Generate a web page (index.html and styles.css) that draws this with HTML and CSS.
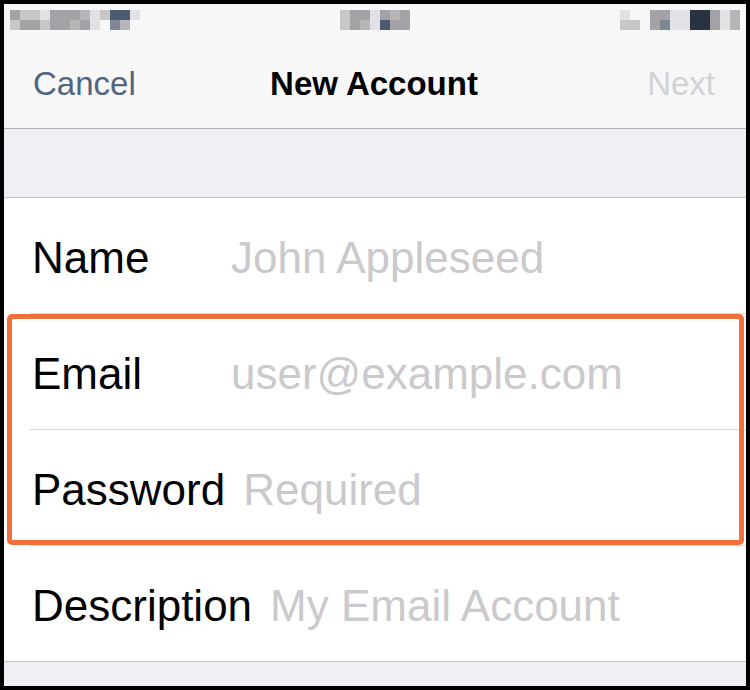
FILE: index.html
```html
<!DOCTYPE html>
<html lang="en">
<head>
<meta charset="utf-8">
<title>New Account</title>
<link rel="stylesheet" href="styles.css">
</head>
<body>
<div class="screen">
  <div class="status">
    <div class="mosaic mosaic-left">
      <i class="g1"></i><i class="g2"></i><i class="g2"></i><i class="g3"></i><i class="g1"></i><i class="g1"></i><i class="g1"></i><i class="g4"></i><i class="g3"></i><i class="g2"></i><i class="d1"></i><i class="d1"></i><i class="g3"></i>
      <i class="g2"></i><i class="g1"></i><i class="g1"></i><i class="g2"></i><i class="g1"></i><i class="g1"></i><i class="g4"></i><i class="g1"></i><i class="g3"></i><i></i><i class="g5"></i><i class="g4"></i><i></i>
    </div>
    <div class="mosaic mosaic-mid">
      <i class="g2"></i><i class="g1"></i><i class="g1"></i><i class="g3"></i><i class="g1"></i><i class="g4"></i><i class="g1"></i>
      <i class="g2"></i><i class="g1"></i><i class="g4"></i><i class="g3"></i><i class="d1"></i><i class="g1"></i><i class="g1"></i>
    </div>
    <div class="mosaic mosaic-right">
      <i class="g3"></i><i></i><i></i><i class="g1"></i><i class="g1"></i><i class="g3"></i><i class="g3"></i><i class="d2"></i><i class="d2"></i><i class="g1"></i><i class="g3"></i><i class="g4"></i>
      <i class="g2"></i><i class="g2"></i><i></i><i class="g1"></i><i class="g5"></i><i class="g3"></i><i class="g3"></i><i class="d2"></i><i class="d2"></i><i class="g1"></i><i class="g3"></i><i class="g4"></i>
    </div>
  </div>
  <div class="navbar">
    <span class="nav-btn nav-cancel">Cancel</span>
    <span class="nav-title">New Account</span>
    <span class="nav-btn nav-next">Next</span>
  </div>
  <div class="band"></div>
  <div class="form">
    <div class="row"><span class="label">Name</span><span class="placeholder">John Appleseed</span></div>
    <div class="group">
      <div class="row"><span class="label">Email</span><span class="placeholder">user@example.com</span></div>
      <div class="row"><span class="label">Password</span><span class="placeholder">Required</span></div>
      <div class="highlight"></div>
    </div>
    <div class="row row-last"><span class="label">Description</span><span class="placeholder">My Email Account</span></div>
  </div>
</div>
</body>
</html>
```
FILE: styles.css
```css
html, body {
  margin: 0;
  background: #000;
}
body {
  padding: 4px;
  font-family: "Liberation Sans", Arial, sans-serif;
}
.screen {
  width: 742px;
  height: 682px;
  background: #efeff4;
  overflow: hidden;
}
.status {
  height: 41px;
  box-sizing: border-box;
  padding: 6px 6px 0;
  background: #f7f7f8;
  display: grid;
  grid-template-columns: 1fr auto 1fr;
  align-items: start;
}
.mosaic {
  display: grid;
  grid-template-rows: 10px 10px;
  grid-auto-columns: 10px;
  grid-auto-flow: row;
}
.mosaic-left { grid-template-columns: repeat(13, 10px); justify-self: start; }
.mosaic-mid { grid-template-columns: repeat(7, 10px); }
.mosaic-right { grid-template-columns: repeat(12, 10px); justify-self: end; }
.mosaic i { display: block; }
.g1 { background: #a3a3a7; }
.g2 { background: #c8c6c6; }
.g3 { background: #e2e2e6; }
.g4 { background: #b6b6b9; }
.g5 { background: #7d8796; }
.d1 { background: #4b5b72; }
.d2 { background: #2a3141; }

.navbar {
  height: 84px;
  box-sizing: border-box;
  padding: 0 31px 6px 29px;
  background: #f7f7f8;
  border-bottom: 1px solid #b1b1b4;
  display: grid;
  grid-template-columns: 1fr auto 1fr;
  align-items: center;
  font-size: 33px;
}
.nav-cancel { color: #51657f; justify-self: start; }
.nav-next { color: #d2d2d5; justify-self: end; }
.nav-title { color: #000; font-weight: 700; }

.band {
  height: 68px;
  border-bottom: 1px solid #c8c7cc;
}
.form {
  background: #fff;
  border-bottom: 1px solid #c8c7cc;
}
.group {
  position: relative;
}
.row {
  height: 116px;
  box-sizing: border-box;
  margin-left: 26px;
  padding: 4px 0 0 2px;
  border-bottom: 1px solid #d6d6da;
  display: flex;
  align-items: center;
  font-size: 44px;
}
.row-last {
  height: 115px;
  border-bottom: none;
}
.label {
  flex: none;
  min-width: 181px;
  margin-right: 18px;
  color: #030303;
}
.placeholder {
  color: #cbc9cb;
  white-space: nowrap;
}
.highlight {
  position: absolute;
  left: 3px;
  right: 2px;
  top: 0;
  bottom: 1px;
  border: 5px solid #f3703a;
  border-radius: 5px;
  pointer-events: none;
}
```
